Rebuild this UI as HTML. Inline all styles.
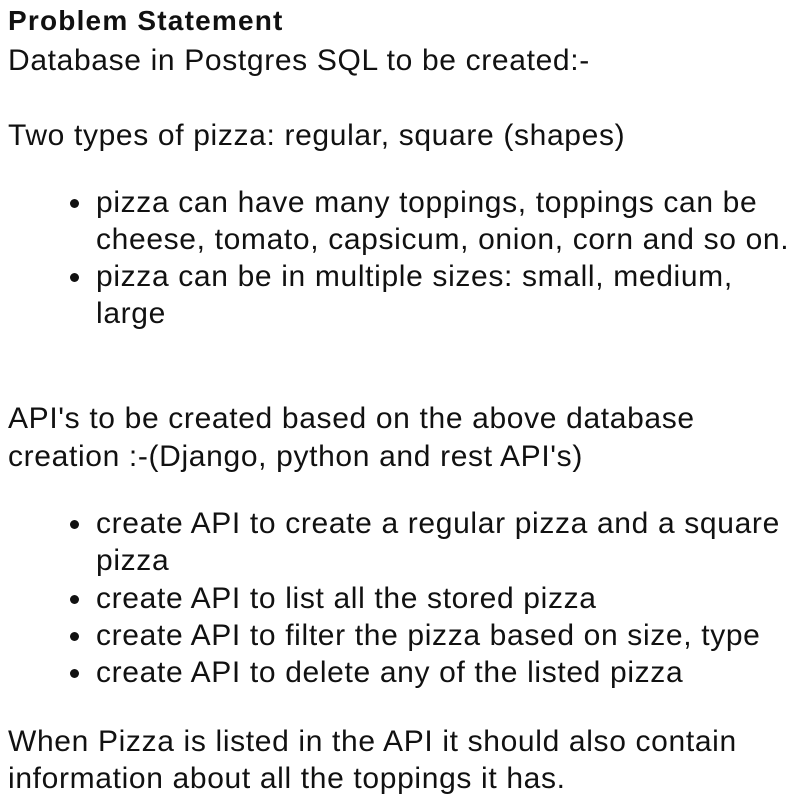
<!DOCTYPE html>
<html><head><meta charset="utf-8"><style>
body{margin:0;width:793px;height:793px;background:#fff;overflow:hidden;font-family:"Liberation Sans",Arial,sans-serif;color:#111;}
.l{position:absolute;left:8px;font-size:30px;letter-spacing:0.65px;line-height:37px;white-space:nowrap;}
.b{left:96px;}
.d{position:absolute;left:70px;width:9px;height:9px;border-radius:50%;background:#111;}
.t{font-weight:bold;font-size:28px;letter-spacing:1.2px;}
</style></head><body>
<div class="l t" style="top:2px">Problem Statement</div>
<div class="l" style="top:42px">Database in Postgres SQL to be created:-</div>
<div class="l" style="top:117px">Two types of pizza: regular, square (shapes)</div>
<div class="d" style="top:199px"></div><div class="l b" style="top:184px">pizza can have many toppings, toppings can be</div>
<div class="l b" style="top:221px">cheese, tomato, capsicum, onion, corn and so on.</div>
<div class="d" style="top:273px"></div><div class="l b" style="top:258px">pizza can be in multiple sizes: small, medium,</div>
<div class="l b" style="top:295px">large</div>
<div class="l" style="top:400px">API's to be created based on the above database</div>
<div class="l" style="top:438px">creation :-(Django, python and rest API's)</div>
<div class="d" style="top:520px"></div><div class="l b" style="top:505px">create API to create a regular pizza and a square</div>
<div class="l b" style="top:542px">pizza</div>
<div class="d" style="top:595px"></div><div class="l b" style="top:580px">create API to list all the stored pizza</div>
<div class="d" style="top:632px"></div><div class="l b" style="top:617px">create API to filter the pizza based on size, type</div>
<div class="d" style="top:669px"></div><div class="l b" style="top:654px">create API to delete any of the listed pizza</div>
<div class="l" style="top:723px">When Pizza is listed in the API it should also contain</div>
<div class="l" style="top:760px">information about all the toppings it has.</div>
</body></html>
